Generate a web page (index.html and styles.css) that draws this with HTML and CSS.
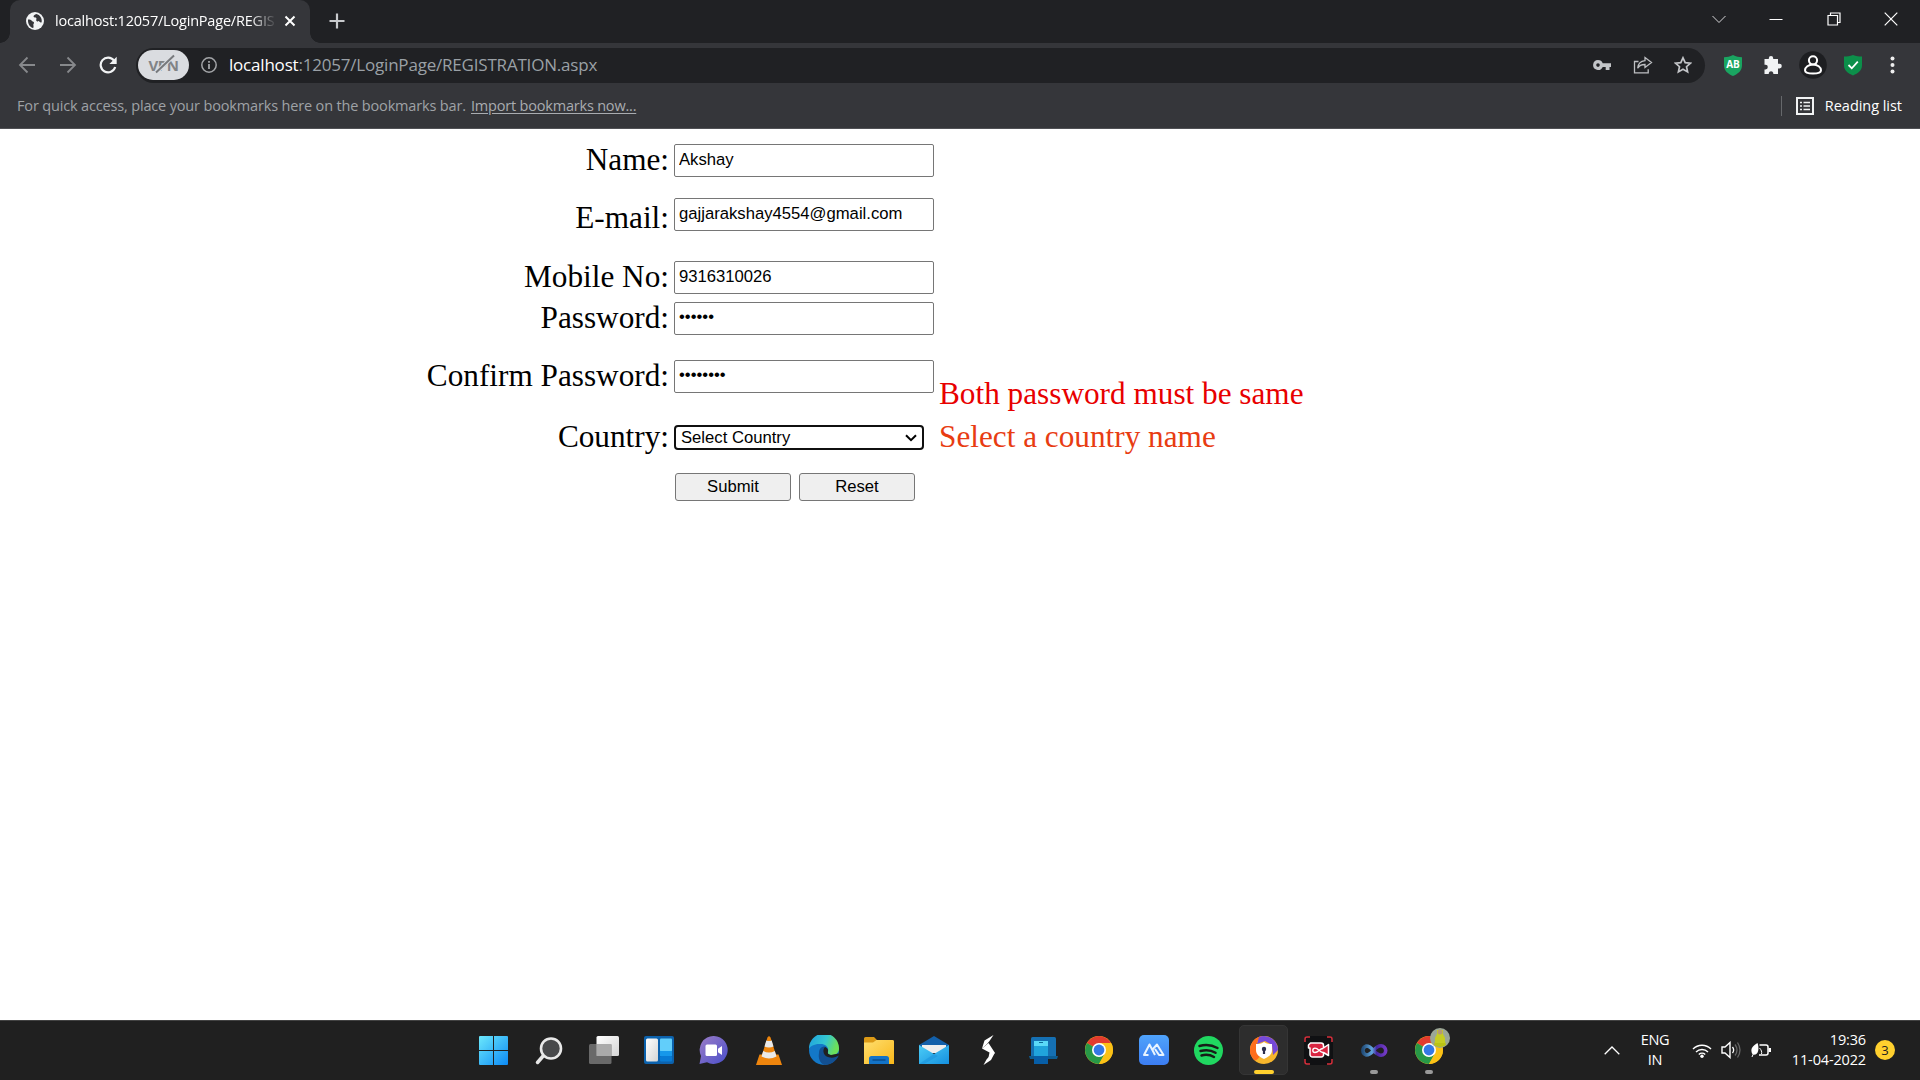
FILE: index.html
```html
<!DOCTYPE html>
<html lang="en">
<head>
<meta charset="utf-8">
<title>Registration</title>
<link rel="stylesheet" href="styles.css">
</head>
<body>
<header class="browser">
  <div class="tabstrip">
    <div class="tab">
      <svg class="favicon" width="18" height="18" viewBox="0 0 18 18"><circle cx="9" cy="9" r="9" fill="#f1f3f4"/><path d="M2 7.500c2 0 3.200 .4 4 1.500s2 .5 2 1.700-1 1.300-.6 2.600c.3 1 .1 2.100-.2 2.700C4 15.500 1.700 12 2 7.500z" fill="#35363a"/><path d="M10.500 2c-2 .8-3.300 1.500-2.900 2.800.4 1.200 2 .3 2.700 1.300.6 1-.7 2 .2 2.900 1 .9 2.500.1 3.500 1 .6.500 1 .8 1.600.3C16.500 6.500 13.800 2.700 10.500 2z" fill="#35363a"/></svg>
      <span class="tab-title">localhost:12057/LoginPage/REGIS</span>
      <svg class="tab-close" width="12" height="12" viewBox="0 0 12 12"><path d="M1.500 1.500l9 9m0-9l-9 9" stroke="#fff" stroke-width="2"/></svg>
    </div>
    <svg class="new-tab" width="16" height="16" viewBox="0 0 16 16"><path d="M8 .5v15M.5 8h15" stroke="#c8cacd" stroke-width="2.200"/></svg>
    <div class="window-buttons">
      <svg width="14" height="14" viewBox="0 0 14 14"><path d="M.5 4l6.500 6.500L13.500 4" fill="none" stroke="#d5d6d8"/></svg>
      <svg width="14" height="14" viewBox="0 0 14 14"><path d="M.5 7.500h13" stroke="#fff"/></svg>
      <svg width="14" height="14" viewBox="0 0 14 14"><path d="M1 3.500h9.500V13H1zM3.500 3V1H13v9.500h-2" fill="none" stroke="#fff" stroke-width="1.200"/></svg>
      <svg width="14" height="14" viewBox="0 0 14 14"><path d="M.7.7l12.600 12.600m0-12.600L.7 13.300" stroke="#fff" stroke-width="1.200"/></svg>
    </div>
  </div>
  <div class="toolbar">
    <div class="nav">
      <svg width="18" height="18" viewBox="0 0 18 18"><path d="M17 9H2m7.500-7.500L2 9l7.500 7.500" fill="none" stroke="#87898c" stroke-width="1.800"/></svg>
      <svg width="18" height="18" viewBox="0 0 18 18"><path d="M1 9h15M8.500 1.500L16 9l-7.500 7.500" fill="none" stroke="#87898c" stroke-width="1.800"/></svg>
      <svg width="18" height="18" viewBox="0 0 18 18"><path d="M15 4.500A7.400 7.400 0 1 0 16.200 11" fill="none" stroke="#f1f3f4" stroke-width="2.200"/><path d="M17.700.7V8h-7.300z" fill="#f1f3f4"/></svg>
    </div>
    <div class="omnibox">
      <span class="vpn">VPN<svg class="vpn-slash" width="22" height="20" viewBox="0 0 22 20"><path d="M2 18.500L20 1.500" stroke="#dadce0" stroke-width="4"/><path d="M2 18.500L20 1.500" stroke="#77797c" stroke-width="2"/></svg></span>
      <svg width="16" height="16" viewBox="0 0 16 16"><circle cx="8" cy="8" r="7.200" fill="none" stroke="#a3a5a8" stroke-width="1.500"/><path d="M8 7v5M8 4v1.800" stroke="#a3a5a8" stroke-width="1.800"/></svg>
      <span class="url"><b>localhost</b>:12057/LoginPage/REGISTRATION.aspx</span>
      <div class="omni-icons">
        <svg width="18" height="12" viewBox="0 0 18 12"><path fill-rule="evenodd" d="M5 1a5 5 0 0 1 4.700 3.300H18V8h-1.500v3h-3.800V8h-3A5 5 0 1 1 5 1zm0 3.300a1.800 1.800 0 1 0 0 3.600 1.800 1.800 0 0 0 0-3.600z" fill="#c3c5c8"/></svg>
        <svg width="20" height="18" viewBox="0 0 20 18"><path d="M5.500 5.500H1.500v11.300h13.700v-3.500M12 1.500l6.500 5-6.500 5V8.500c-3.500 0-6 1.200-7.300 3.800C5 8 7.300 5 12 4.600z" fill="none" stroke="#bdbfc2" stroke-width="1.300"/></svg>
        <svg width="18" height="18" viewBox="0 0 18 18"><path d="M9 1.800l2.200 4.800 5.200.6-3.900 3.500 1.100 5.200L9 13.300l-4.600 2.600 1.100-5.200-3.900-3.500 5.200-.6z" fill="none" stroke="#c3c5c8" stroke-width="1.700"/></svg>
      </div>
    </div>
    <div class="extensions">
      <span class="shield"><svg width="18" height="21" viewBox="0 0 18 21"><path d="M9 0c3 1.700 6 2.100 9 2.200v8.300c0 5-4 8.500-9 10.500-5-2-9-5.500-9-10.500V2.200C3 2.100 6 1.700 9 0z" fill="#1aa561"/></svg><span class="shield-text">AB</span></span>
      <svg width="18" height="18" viewBox="0 0 18 18"><path d="M7 0a2.200 2.200 0 0 1 2.200 2.200V3H14v4.800h1.500a2.300 2.300 0 0 1 0 4.600H14V18H9.300v-1a2.300 2.300 0 0 0-4.500 0v1H.5v-4.600h1a2.300 2.300 0 0 0 0-4.600h-1V3h4.300v-.8A2.200 2.200 0 0 1 7 0z" fill="#f1f3f4"/></svg>
      <svg width="28" height="28" viewBox="0 0 28 28"><circle cx="14" cy="14" r="13.800" fill="#1d1e21"/><circle cx="14" cy="9.300" r="4.100" fill="none" stroke="#fff" stroke-width="2"/><path d="M14 13.400c-4.500 0-8 3-8 5.800 0 2.500 3.300 3.300 8 3.300s8-.8 8-3.300c0-2.800-3.500-5.800-8-5.800z" fill="none" stroke="#fff" stroke-width="2"/></svg>
      <svg width="18" height="21" viewBox="0 0 18 21"><path d="M9 0c3 1.200 6 1.600 9 1.600v9C18 15.500 14 18.500 9 20.500c-5-2-9-5-9-9.900v-9C3 1.600 6 1.200 9 0z" fill="#0c8f4a"/><path d="M4.500 10l3.300 3.300 6-6.600" fill="none" stroke="#fff" stroke-width="1.800"/></svg>
      <svg width="5" height="18" viewBox="0 0 5 18"><circle cx="2.500" cy="2.500" r="2" fill="#eee"/><circle cx="2.500" cy="9" r="2" fill="#eee"/><circle cx="2.500" cy="15.500" r="2" fill="#eee"/></svg>
    </div>
  </div>
  <div class="bookmarks">
    <span class="hint">For quick access, place your bookmarks here on the bookmarks bar.</span>
    <a class="import">Import bookmarks now...</a>
    <div class="reading">
      <svg width="18" height="18" viewBox="0 0 18 18"><path d="M1 1h16v16H1z" fill="none" stroke="#f1f3f4" stroke-width="2"/><path d="M4 5.500h2m1.500 0H14M4 9h2m1.500 0H14M4 12.500h2m1.500 0H14" stroke="#f1f3f4" stroke-width="1.700"/></svg>
      <span>Reading list</span>
    </div>
  </div>
</header>

<main class="page">
  <form>
    <div class="row name"><label>Name:</label><input type="text" value="Akshay"></div>
    <div class="row email"><label>E-mail:</label><input type="text" value="gajjarakshay4554@gmail.com"></div>
    <div class="row mobile"><label>Mobile No:</label><input type="text" value="9316310026"></div>
    <div class="row password"><label>Password:</label><input type="password" value="secret"></div>
    <div class="row confirm"><label>Confirm Password:</label><input type="password" value="password"><span class="error mismatch">Both password must be same</span></div>
    <div class="row country"><label>Country:</label><div class="select"><span>Select Country</span><svg width="12" height="8" viewBox="0 0 12 8"><path d="M1 1.200l5 5 5-5" fill="none" stroke="#000" stroke-width="2"/></svg></div><span class="error missing">Select a country name</span></div>
    <div class="buttons"><button type="button">Submit</button><button type="button">Reset</button></div>
  </form>
</main>

<footer class="taskbar">
  <svg width="0" height="0" class="defs"><defs>
    <linearGradient id="win" x1="0" y1="0" x2="1" y2="1"><stop offset="0" stop-color="#6ce8fb"/><stop offset="1" stop-color="#0c8af5"/></linearGradient>
    <linearGradient id="white" x1="0" y1="0" x2="1" y2="1"><stop offset="0" stop-color="#fff"/><stop offset="1" stop-color="#d5d5d5"/></linearGradient>
    <linearGradient id="chat" x1="0" y1="0" x2="1" y2="1"><stop offset="0" stop-color="#9b7cc6"/><stop offset="1" stop-color="#4a4fcb"/></linearGradient>
    <linearGradient id="edge" x1="0" y1="0" x2="1" y2=".3"><stop offset="0" stop-color="#1d9fe0"/><stop offset=".6" stop-color="#35c7d0"/><stop offset="1" stop-color="#6ce05a"/></linearGradient>
    <linearGradient id="folder" x1="0" y1="0" x2="1" y2="1"><stop offset="0" stop-color="#ffdf70"/><stop offset="1" stop-color="#f9b719"/></linearGradient>
    <linearGradient id="mail" x1="0" y1="0" x2="1" y2="1"><stop offset="0" stop-color="#4ccdf7"/><stop offset="1" stop-color="#1590df"/></linearGradient>
    <linearGradient id="tile" x1="0" y1="0" x2="0" y2="1"><stop offset="0" stop-color="#4fa3fb"/><stop offset="1" stop-color="#3c7df2"/></linearGradient>
    <linearGradient id="vs" x1="0" y1="0" x2="1" y2="0"><stop offset="0" stop-color="#234f7c"/><stop offset=".4" stop-color="#62a7df"/><stop offset=".6" stop-color="#4526a0"/><stop offset="1" stop-color="#743ac4"/></linearGradient>
    <g id="chrome"><circle cx="14" cy="14" r="14" fill="#fbc116"/><path d="M14 14L1.900 7A14 14 0 0 1 26.100 7z" fill="#e33b2e"/><path d="M14 14L1.900 7A14 14 0 0 0 14 28l5-9z" fill="#279847"/><path d="M14 7h12.100A14 14 0 0 1 14 28l6-10.500z" fill="#fbc116"/><circle cx="14" cy="14" r="7" fill="#fff"/><circle cx="14" cy="14" r="5.400" fill="#3478e6"/></g>
  </defs></svg>
  <div class="apps">
    <div class="app"><svg width="29" height="29" viewBox="0 0 29 29"><path d="M1 0h13v14H0V1a1 1 0 0 1 1-1zM15 0h13a1 1 0 0 1 1 1v13H15zM0 15h14v14H1a1 1 0 0 1-1-1zM15 15h14v13a1 1 0 0 1-1 1H15z" fill="url(#win)"/></svg></div>
    <div class="app"><svg width="28" height="29" viewBox="0 0 28 29"><path d="M9 19l-6.500 7.500" stroke="#e6e6e6" stroke-width="3.500" stroke-linecap="round"/><circle cx="16" cy="12.500" r="10" fill="#48494b" stroke="#e9e9e9" stroke-width="2.600"/></svg></div>
    <div class="app"><svg width="30" height="28" viewBox="0 0 30 28"><rect x="7.500" width="22.500" height="20" rx="1.500" fill="url(#white)"/><rect y="8" width="22.500" height="20" rx="1.500" fill="#777" opacity=".85"/><rect x="7.500" y="8" width="15" height="12" fill="#aaa"/></svg></div>
    <div class="app"><svg width="30" height="28" viewBox="0 0 30 28"><rect width="30" height="28" rx="2" fill="#0c62ad"/><rect x="2" y="2.500" width="12" height="23" rx="1.500" fill="url(#white)"/><rect x="16" y="2.500" width="12" height="13" rx="1" fill="#62cefa"/><rect x="16" y="15" width="12" height="5" fill="#1698ea"/><rect x="16" y="20" width="12" height="5.500" rx="1" fill="#087bd4"/></svg></div>
    <div class="app"><svg width="29" height="29" viewBox="0 0 29 29"><path d="M15 0a14 14 0 1 1-7 26.300L.5 28 2 20A14 14 0 0 1 15 0z" fill="url(#chat)"/><rect x="6.500" y="8.500" width="11.500" height="11.500" rx="1.500" fill="#fff"/><path d="M19 12.800l4-2.800v9l-4-2.800z" fill="#fff"/></svg></div>
    <div class="app"><svg width="26" height="29" viewBox="0 0 26 29"><path d="M3.500 18.500h19L26 29H0z" fill="#ee850d"/><path d="M11.500 1.500Q13-1 14.500 1.500L21 22q-8 5-16 0z" fill="#ee850d"/><path d="M10.300 4.500L8.500 10.500q4.500 2 9 0l-1.800-6q-2.700 1-5.400 0zM7.200 15L5.500 20.500q7.500 4 15 0L18.800 15q-5.800 3-11.600 0z" fill="#e9e9e9"/></svg></div>
    <div class="app"><svg width="30" height="30" viewBox="0 0 30 30"><circle cx="15" cy="15" r="15" fill="#1378c8"/><path d="M0 14A15 15 0 0 1 30 13c.3 4-2.500 7-7 7-3.500 0-5-1.500-4-3.500 1-4-2-7.500-7.500-7.500C6 8.500 1 11 0 14z" fill="url(#edge)"/><path d="M10 18c0-4 2-6.500 6-6.500 2 1 3.500 3 3 5-1 2 .5 3.500 4 3.500 3 0 5-1 6-2l1 2c-3 7-9 10-15 10-4-2-6-7-5-12z" fill="#124f91"/><path d="M16 12c2 .5 3.500 2.500 3 4.500-.6 1.700 0 3 3 3.500l8-1.500v2c-2.500 1.500-6 2.500-9 2-6-.5-8.500-7-5-10.500z" fill="#202020"/></svg></div>
    <div class="app"><svg width="30" height="27" viewBox="0 0 30 27"><path d="M0 1.500A1.500 1.500 0 0 1 1.500 0H10l3 3h15a2 2 0 0 1 2 2v5H0z" fill="#dc9a16"/><path d="M0 5.500h9L12.500 3H28.500A1.500 1.500 0 0 1 30 4.500V27H0z" fill="url(#folder)"/><path d="M5 27v-5.500A2.500 2.500 0 0 1 7.500 19h15a2.500 2.500 0 0 1 2.500 2.500V27z" fill="#1373c7"/><path d="M8.500 23h13" stroke="#0a4c8e" stroke-width="1.500"/></svg></div>
    <div class="app"><svg width="30" height="28" viewBox="0 0 30 28"><path d="M0 9L15 0l15 9v6H0z" fill="#1360aa"/><path d="M3 9h24v8H3z" fill="#eee"/><path d="M0 9l15 9L30 9v19H0z" fill="url(#mail)"/><path d="M0 28L15 18 19 20 5 28z" fill="#1890db" opacity=".5"/></svg></div>
    <div class="app"><svg width="15" height="30" viewBox="0 0 15 30"><path d="M12.500 0L3.500 5.500 1 13.500l5-4.500 2.500-3zM2.500 30l7.500-5 4-7.500-5.500 3.500-3 3.500z" fill="#fff"/><path d="M1 13.500L7.500 8l6.500 10-6.500 4.500 1-5z" fill="#fff"/></svg></div>
    <div class="app"><svg width="29" height="27" viewBox="0 0 29 27"><rect x="2" y="0" width="25" height="20" rx="1.500" fill="#1570b3"/><path d="M0 19h29l-1 3H1z" fill="#0c5d94"/><rect x="5" y="4" width="14" height="23" rx="1" fill="#20a4dc"/><path d="M5 4h14v5H5z" fill="#5ad9f8"/><path d="M5 19h14v8H5z" fill="#075ea7"/><path d="M10 5.500h4" stroke="#0e6b9b"/></svg></div>
    <div class="app"><svg width="28" height="28" viewBox="0 0 28 28"><use href="#chrome"/></svg></div>
    <div class="app"><svg width="30" height="30" viewBox="0 0 30 30"><rect width="30" height="30" rx="5" fill="url(#tile)"/><path d="M9.500 20H5l5.500-10.500L16 20M13.500 14.500l4.500-5L24.500 20H20l-4-6" fill="none" stroke="#e9f4ff" stroke-width="2" stroke-linejoin="round"/></svg></div>
    <div class="app"><svg width="29" height="29" viewBox="0 0 29 29"><circle cx="14.500" cy="14.500" r="14.500" fill="#20d760"/><path d="M5.500 10c6-1.700 12.500-1 18 2M6.500 15c5.500-1.500 10.500-1 15 1.800M7.500 19.500c4.500-1.200 8.500-.8 12.500 1.500" fill="none" stroke="#171c18" stroke-width="2.500" stroke-linecap="round"/></svg></div>
    <div class="app active"><svg width="28" height="28" viewBox="0 0 28 28"><circle cx="14" cy="14" r="14" fill="#f7b62c"/><path d="M12 0A14 14 0 0 0 5 24.500C12 23 12 10 7 8c0-4 3-5 5-8z" fill="#ff6d1b"/><path d="M9 1a14 14 0 0 1 19 13l-5 5-1-10-7-4-8 3z" fill="#7549d8"/><path d="M14 6c3 2 5 2 8 2v6c0 5-4 7-8 9-4-2-8-4-8-9V8c3 0 5 0 8-2z" fill="#fff"/><circle cx="14" cy="13" r="2.200" fill="#2b2e4c"/><path d="M12.900 13h2.200v5h-2.200z" fill="#2b2e4c"/></svg><i class="mark wide"></i></div>
    <div class="app"><svg width="29" height="29" viewBox="0 0 29 29"><rect width="29" height="29" rx="4" fill="#101113"/><path d="M1 6V3a2 2 0 0 1 2-2h3M23 1h3a2 2 0 0 1 2 2v3M28 23v3a2 2 0 0 1-2 2h-3M6 28H3a2 2 0 0 1-2-2v-3" fill="none" stroke="#d8303c" stroke-width="1.500"/><path d="M6.500 7H17a2.500 2.500 0 0 1 2.500 2.500V12l5-3.500v11l-5-3v3A2.500 2.500 0 0 1 17 21H8.500A2.500 2.500 0 0 1 6 18.500V12H4.500V9z" fill="#d92541" stroke="#fff" stroke-width="1.500" stroke-linejoin="round"/><path d="M19 12.500c-3.500 0-4.500 4-8 4a2.200 2.200 0 0 1 0-4.400c3.500 0 4.500 4.400 8 4.400" fill="none" stroke="#fff" stroke-width="1.400"/></svg></div>
    <div class="app running"><svg width="29" height="15" viewBox="0 0 29 15"><path d="M14.500 7.500C12 4.500 10 3 7.300 3a4.700 4.700 0 0 0 0 9c3 0 5-2 7.200-4.500S18.700 2.800 22 2.800a4.700 4.700 0 0 1 0 9.400c-3 0-5-2.200-7.500-4.700z" fill="none" stroke="url(#vs)" stroke-width="3.600"/></svg><i class="mark"></i></div>
    <div class="app running"><svg width="28" height="28" viewBox="0 0 28 28"><use href="#chrome"/></svg><i class="mark"></i><svg class="avatar" width="20" height="20" viewBox="0 0 20 20"><circle cx="10" cy="10" r="10" fill="#9ba796"/><path d="M4 17l2-8h8l2 8q-6 4-12 0z" fill="#bac315"/><path d="M7 2h6v4l2 4v5H5v-5l2-4z" fill="#c5cd22"/><circle cx="10" cy="4" r="2.500" fill="#b59a73"/></svg></div>
  </div>
  <div class="tray">
    <svg class="up" width="16" height="9" viewBox="0 0 16 9"><path d="M.7 8.300L8 1l7.300 7.300" fill="none" stroke="#fff" stroke-width="1.300"/></svg>
    <div class="lang">ENG<br>IN</div>
    <svg class="wifi" width="20" height="15" viewBox="0 0 20 15"><path d="M1 6a12.600 12.600 0 0 1 18 0M4 9a8.500 8.500 0 0 1 12 0M6.800 11.600a4.600 4.600 0 0 1 6.400 0" fill="none" stroke="#fff" stroke-width="1.400"/><circle cx="10" cy="13.200" r="1.700" fill="#fff"/></svg>
    <svg class="sound" width="20" height="18" viewBox="0 0 20 18"><path d="M1 6h3l5-4.500v15L4 12H1z" fill="none" stroke="#fff" stroke-width="1.400"/><path d="M11.500 6q2.300 3 0 6" fill="none" stroke="#fff" stroke-width="1.300"/><path d="M14 3.500q4 5.500 0 11M16.500 1.500q5 7.500 0 15" fill="none" stroke="#666" stroke-width="1.300"/></svg>
    <svg class="battery" width="20" height="16" viewBox="0 0 20 16"><path d="M8.500 3H15a2 2 0 0 1 2 2v6a2 2 0 0 1-2 2H8" fill="none" stroke="#fff" stroke-width="1.500"/><path d="M17.500 6H20v4h-2.500z" fill="#fff"/><path d="M6.500 1C2 4 0 6 .5 9.500c.3 3 2 3.500 4 3C8 11 8 5 6.500 1z" fill="#fff"/><path d="M1 15c1-3 2.500-5 4.500-7M8.500 6c2 2 2.500 4 2 6" fill="none" stroke="#fff"/></svg>
    <div class="clock">19:36<br>11-04-2022</div>
    <span class="badge">3</span>
  </div>
</footer>
</body>
</html>
```
FILE: styles.css
```css
* { box-sizing: border-box; }
body { margin: 0; width: 1920px; height: 1080px; display: flex; flex-direction: column; overflow: hidden; background: #fff; font-family: "Open Sans", "Noto Sans", sans-serif; }
svg { display: block; flex: none; }

.browser { height: 129px; flex: none; background: #35363a; border-bottom: 1px solid #505155; color: #fff; }
.tabstrip { height: 43px; display: flex; align-items: center; background: #202124; padding-left: 10px; }
.tab { width: 300px; height: 43px; background: #35363a; border-radius: 10px 10px 0 0; display: flex; align-items: center; padding: 0 14px 1px 16px; position: relative; }
.tab::before, .tab::after { content: ""; position: absolute; bottom: 0; width: 10px; height: 10px; }
.tab::before { left: -10px; background: radial-gradient(circle at 0 0, #202124 9.5px, #35363a 10px); }
.tab::after { right: -10px; background: radial-gradient(circle at 100% 0, #202124 9.5px, #35363a 10px); }
.tab-title { width: 220px; margin-left: 11px; padding-bottom: 1px; white-space: nowrap; font-size: 14.500px; line-height: 22px; letter-spacing: -.2px; mask-image: linear-gradient(to right, #000 195px, transparent 222px); }
.tab-close { margin-left: 9px; }
.new-tab { margin-left: 19px; margin-bottom: 1px; }
.window-buttons { margin-left: auto; display: flex; gap: 43.300px; padding: 0 22px 6px 0; }

.toolbar { height: 45px; display: flex; align-items: center; padding: 0 0 1px 18px; }
.nav { display: flex; gap: 22.500px; width: 118px; }
.omnibox { width: 1569px; height: 35px; border-radius: 18px; background: #202124; display: flex; align-items: center; padding: 0 13px 0 2px; }
.vpn { width: 51px; height: 30px; border-radius: 15px; background: #dadce0; color: #818386; display: flex; align-items: center; justify-content: center; font: bold 15px "Open Sans", sans-serif; letter-spacing: -.4px; position: relative; margin-right: 12px; }
.vpn-slash { position: absolute; left: 16px; top: 4px; }
.url { margin-left: 12px; font-size: 17px; line-height: 24px; color: #9aa0a6; white-space: nowrap; letter-spacing: -.2px; }
.url b { font-weight: 400; color: #fff; }
.omni-icons { margin-left: auto; display: flex; align-items: center; gap: 21.500px; }
.extensions { display: flex; align-items: center; margin-left: 19px; }
.extensions > :nth-child(2) { margin-left: 22px; }
.extensions > :nth-child(3) { margin-left: 17px; }
.extensions > :nth-child(4) { margin-left: 17px; }
.extensions > :nth-child(5) { margin-left: 28px; }
.shield { position: relative; }
.shield-text { position: absolute; inset: 2px 0 0; text-align: center; font: bold 10px/14px "Open Sans", sans-serif; }

.bookmarks { height: 40px; display: flex; align-items: center; padding: 0 18px 5px 17px; font-size: 14.500px; color: #9fa2a6; white-space: nowrap; }
.hint { width: 454px; letter-spacing: -.16px; }
.import { text-decoration: underline; text-underline-offset: 2px; color: #a9acb0; letter-spacing: -.2px; }
.reading { margin-left: auto; display: flex; align-items: center; gap: 11px; color: #fff; border-left: 1px solid #66686b; padding-left: 14px; height: 20px; letter-spacing: -.04px; }

.page { height: 891px; flex: none; padding-top: 15px; font: 31.250px/34px "Liberation Serif", "Times New Roman", serif; color: #000; }
.row { display: flex; align-items: flex-start; height: 34px; }
.row label { width: 669px; text-align: right; margin: -1px 5px 0 0; white-space: nowrap; }
.row input { width: 260px; height: 33px; margin: 0; padding: 2px 4px 3px; border: 1px solid #767676; border-radius: 2px; background: #fff; color: #000; font: 16.670px "Liberation Sans", Arial, sans-serif; }
.row input[type="password"] { padding: 1px 4px 4px; }
.error { margin-left: 5px; color: #e80000; white-space: nowrap; }
.email { margin-top: 20px; }
.email label { padding-top: 4px; }
.mobile { margin-top: 29px; }
.password { margin-top: 7px; }
.confirm { margin-top: 24px; }
.mismatch { padding-top: 17px; }
.country { margin-top: 31px; height: 26px; }
.country label, .missing { margin-top: -5px; }
.missing { margin-left: 15px; color: #e83c12; }
.select { width: 250px; height: 25px; border: 2px solid #101010; border-radius: 4px; display: flex; align-items: center; justify-content: space-between; padding: 0 5px; font: 16.670px/22px "Liberation Sans", Arial, sans-serif; }
.buttons { display: flex; gap: 8px; margin: 22px 0 0 675px; }
.buttons button { width: 116px; height: 28px; margin: 0; padding: 0; border: 1px solid #767676; border-radius: 3px; background: #efefef; color: #000; font: 16.670px "Liberation Sans", Arial, sans-serif; }

.taskbar { height: 60px; flex: none; background: #202020; border-top: 1px solid #424242; display: flex; align-items: center; padding: 0 25px 1px 466px; color: #fff; }
.defs { position: absolute; }
.apps { display: flex; }
.app { width: 55.040px; height: 50px; display: flex; align-items: center; justify-content: center; position: relative; }
.active { background: #2d2d2d; border: 1px solid #353535; border-radius: 5px; width: 49px; margin: 0 3px; }
.mark { position: absolute; bottom: 1px; left: calc(50% - 4px); width: 8px; height: 4px; border-radius: 2px; background: #999; }
.mark.wide { left: calc(50% - 10px); width: 20px; bottom: 0; background: #ffd02e; }
.avatar { position: absolute; right: 7px; top: 3px; }
.tray { margin-left: auto; display: flex; align-items: center; font-size: 14.500px; line-height: 20px; }
.lang { width: 40px; text-align: center; margin: 0 17px 0 15px; letter-spacing: -.3px; }
.sound { margin-left: 9px; }
.battery { margin-left: 10px; }
.clock { width: 95px; text-align: right; letter-spacing: -.15px; white-space: nowrap; }
.badge { width: 20px; height: 20px; border-radius: 50%; background: #ffd02e; color: #222; font-size: 13px; text-align: center; margin-left: 9px; }
```
